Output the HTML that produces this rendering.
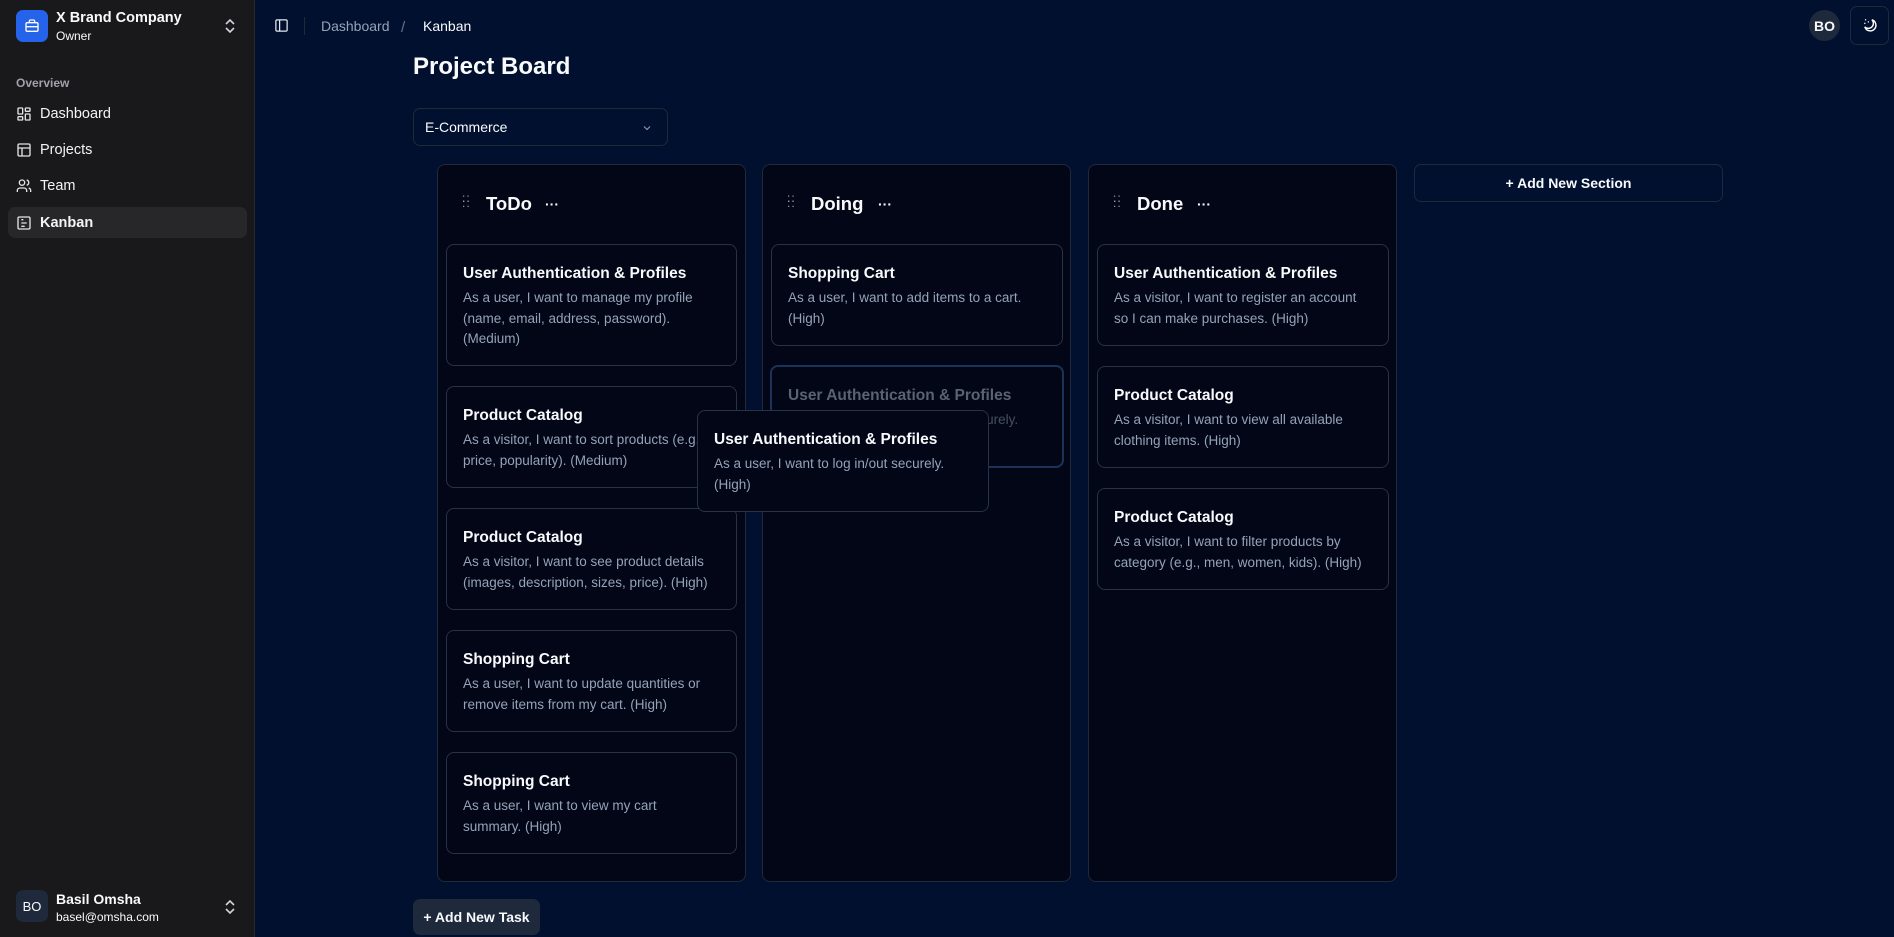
<!DOCTYPE html>
<html><head><meta charset="utf-8"><style>
*{box-sizing:border-box;margin:0;padding:0}
body{width:1894px;height:937px;overflow:hidden;background:#01102f;font-family:"Liberation Sans",sans-serif;color:#f8fafc;position:relative}
.a{position:absolute}
.side{left:0;top:0;width:255px;height:937px;background:#19191b;border-right:1px solid #27272a}
.nav{left:8px;width:239px;height:31px;border-radius:7px;display:flex;align-items:center;padding-left:32px;font-size:14.5px;color:#f4f4f5}
.nav svg{position:absolute;left:8px;top:8px}
.col{background:#020617;border:1px solid #1e293b;border-radius:8px}
.card{background:#020617;border:1px solid #273244;border-radius:8px;padding:0 16px}
.card h4{font-size:15.5px;font-weight:bold;margin-top:20px;color:#f8fafc}
.card p{font-size:13.5px;line-height:20.5px;color:#94a3b8;margin-top:5px}
.ch{font-size:18.5px;font-weight:bold}
.dots{font-size:14px;font-weight:bold;letter-spacing:0}
.grip{color:#94a3b8;font-size:12px;line-height:5px;letter-spacing:1px}
</style></head><body>
<div class="a side">
  <div class="a" style="left:16px;top:10px;width:32px;height:32px;background:#2563eb;border-radius:7px">
    <svg class="a" style="left:8px;top:8px" width="16" height="16" viewBox="0 0 24 24" fill="none" stroke="#fff" stroke-width="2"><rect x="3" y="7" width="18" height="13" rx="2"/><path d="M8 7V5a2 2 0 0 1 2-2h4a2 2 0 0 1 2 2v2M3 13h18"/></svg>
  </div>
  <div class="a" style="left:56px;top:10px;font-size:14.5px;font-weight:bold">X Brand Company</div>
  <div class="a" style="left:56px;top:29px;font-size:12px">Owner</div>
  <svg class="a" style="left:223px;top:18px" width="14" height="16" viewBox="0 0 14 16" fill="none" stroke="#d4d4d8" stroke-width="1.6"><path d="M3 6l4-4 4 4M3 10l4 4 4-4"/></svg>
  <div class="a" style="left:16px;top:76px;font-size:12px;color:#a1a1aa;font-weight:bold">Overview</div>
  <div class="a nav" style="top:98px"><svg width="16" height="16" viewBox="0 0 24 24" fill="none" stroke="#e4e4e7" stroke-width="2"><rect x="3" y="3" width="7" height="9" rx="1"/><rect x="14" y="3" width="7" height="5" rx="1"/><rect x="14" y="12" width="7" height="9" rx="1"/><rect x="3" y="16" width="7" height="5" rx="1"/></svg>Dashboard</div>
  <div class="a nav" style="top:134px"><svg width="16" height="16" viewBox="0 0 24 24" fill="none" stroke="#e4e4e7" stroke-width="2"><rect x="3" y="3" width="18" height="18" rx="2"/><path d="M3 9h18M9 21V9"/></svg>Projects</div>
  <div class="a nav" style="top:170px"><svg width="16" height="16" viewBox="0 0 24 24" fill="none" stroke="#e4e4e7" stroke-width="2"><circle cx="9" cy="7" r="4"/><path d="M2 21v-2a4 4 0 0 1 4-4h6a4 4 0 0 1 4 4v2M16 3.1a4 4 0 0 1 0 7.8M22 21v-2a4 4 0 0 0-3-3.9"/></svg>Team</div>
  <div class="a nav" style="top:207px;background:#27272a;font-weight:bold"><svg width="16" height="16" viewBox="0 0 24 24" fill="none" stroke="#e4e4e7" stroke-width="2"><rect x="3" y="3" width="18" height="18" rx="2"/><path d="M8 7h3M8 12h8M8 17h5"/></svg>Kanban</div>
  <div class="a" style="left:16px;top:890px;width:32px;height:32px;background:#1e293b;border-radius:7px;font-size:13px;display:flex;align-items:center;justify-content:center">BO</div>
  <div class="a" style="left:56px;top:891px;font-size:14px;font-weight:bold">Basil Omsha</div>
  <div class="a" style="left:56px;top:910px;font-size:12px">basel@omsha.com</div>
  <svg class="a" style="left:223px;top:899px" width="14" height="16" viewBox="0 0 14 16" fill="none" stroke="#d4d4d8" stroke-width="1.6"><path d="M3 6l4-4 4 4M3 10l4 4 4-4"/></svg>
</div>
<svg class="a" style="left:274px;top:18px" width="15" height="15" viewBox="0 0 24 24" fill="none" stroke="#e2e8f0" stroke-width="2"><rect x="3" y="3" width="18" height="18" rx="2"/><path d="M9 3v18"/></svg>
<div class="a" style="left:304px;top:17px;width:1px;height:18px;background:#1e293b"></div>
<div class="a" style="left:321px;top:18px;font-size:14px;color:#94a3b8">Dashboard</div>
<div class="a" style="left:401px;top:19px;font-size:15px;color:#64748b">/</div>
<div class="a" style="left:423px;top:18px;font-size:14px">Kanban</div>
<div class="a" style="left:1809px;top:10px;width:31px;height:31px;border-radius:50%;background:#1e293b;font-size:14px;font-weight:bold;display:flex;align-items:center;justify-content:center">BO</div>
<div class="a" style="left:1850px;top:6px;width:39px;height:39px;border:1px solid #1e293b;border-radius:7px">
  <svg class="a" style="left:11px;top:10px" width="17" height="17" viewBox="0 0 24 24" fill="none" stroke="#fff" stroke-width="2"><path d="M14 4a8 8 0 1 1-10 10 7 7 0 0 0 10-10z"/><circle cx="5" cy="4" r="1" fill="#fff" stroke="none"/><circle cx="9" cy="7" r="1" fill="#fff" stroke="none"/><circle cx="4" cy="9" r="1" fill="#fff" stroke="none"/></svg>
</div>
<div class="a" style="left:413px;top:53px;font-size:24px;font-weight:bold">Project Board</div>
<div class="a" style="left:413px;top:108px;width:255px;height:38px;border:1px solid #1e293b;border-radius:7px;font-size:14px;padding:10px 11px">E-Commerce
  <svg class="a" style="left:227px;top:13px" width="12" height="12" viewBox="0 0 24 24" fill="none" stroke="#94a3b8" stroke-width="2"><path d="M6 9l6 6 6-6"/></svg></div>

<div class="a col" style="left:437px;top:164px;width:309px;height:718px"></div>
<div class="a col" style="left:762px;top:164px;width:309px;height:718px"></div>
<div class="a col" style="left:1088px;top:164px;width:309px;height:718px"></div>
<div class="a" style="left:1414px;top:164px;width:309px;height:38px;border:1px solid #1e293b;border-radius:7px;font-size:14px;font-weight:bold;text-align:center;line-height:36px">+ Add New Section</div>

<div class="a grip" style="left:462px;top:196px">::<br>::</div>
<div class="a ch" style="left:486px;top:193px">ToDo</div><div class="a dots" style="left:545px;top:196px">···</div>
<div class="a grip" style="left:787px;top:196px">::<br>::</div>
<div class="a ch" style="left:811px;top:193px">Doing</div><div class="a dots" style="left:878px;top:196px">···</div>
<div class="a grip" style="left:1113px;top:196px">::<br>::</div>
<div class="a ch" style="left:1137px;top:193px">Done</div><div class="a dots" style="left:1197px;top:196px">···</div>

<div class="a card" style="left:446px;top:244px;width:291px;height:122px"><h4>User Authentication &amp; Profiles</h4><p>As a user, I want to manage my profile (name, email, address, password). (Medium)</p></div>
<div class="a card" style="left:446px;top:386px;width:291px;height:102px"><h4>Product Catalog</h4><p>As a visitor, I want to sort products (e.g., price, popularity). (Medium)</p></div>
<div class="a card" style="left:446px;top:508px;width:291px;height:102px"><h4>Product Catalog</h4><p>As a visitor, I want to see product details (images, description, sizes, price). (High)</p></div>
<div class="a card" style="left:446px;top:630px;width:291px;height:102px"><h4>Shopping Cart</h4><p>As a user, I want to update quantities or remove items from my cart. (High)</p></div>
<div class="a card" style="left:446px;top:752px;width:291px;height:102px"><h4>Shopping Cart</h4><p>As a user, I want to view my cart<br>summary. (High)</p></div>

<div class="a card" style="left:771px;top:244px;width:292px;height:102px"><h4>Shopping Cart</h4><p>As a user, I want to add items to a cart. (High)</p></div>
<div class="a card" style="left:770px;top:365px;width:294px;height:103px;border:2px solid #1b3356"><h4 style="color:#5b6270">User Authentication &amp; Profiles</h4><p style="color:#475060">As a user, I want to log in/out securely.</p></div>

<div class="a card" style="left:1097px;top:244px;width:292px;height:102px"><h4>User Authentication &amp; Profiles</h4><p>As a visitor, I want to register an account so I can make purchases. (High)</p></div>
<div class="a card" style="left:1097px;top:366px;width:292px;height:102px"><h4>Product Catalog</h4><p>As a visitor, I want to view all available clothing items. (High)</p></div>
<div class="a card" style="left:1097px;top:488px;width:292px;height:102px"><h4>Product Catalog</h4><p>As a visitor, I want to filter products by category (e.g., men, women, kids). (High)</p></div>

<div class="a card" style="left:697px;top:410px;width:292px;height:102px"><h4>User Authentication &amp; Profiles</h4><p>As a user, I want to log in/out securely. (High)</p></div>

<div class="a" style="left:413px;top:899px;width:127px;height:36px;background:#1e293b;border-radius:7px;font-size:14px;font-weight:bold;text-align:center;line-height:36px">+ Add New Task</div>
</body></html>
